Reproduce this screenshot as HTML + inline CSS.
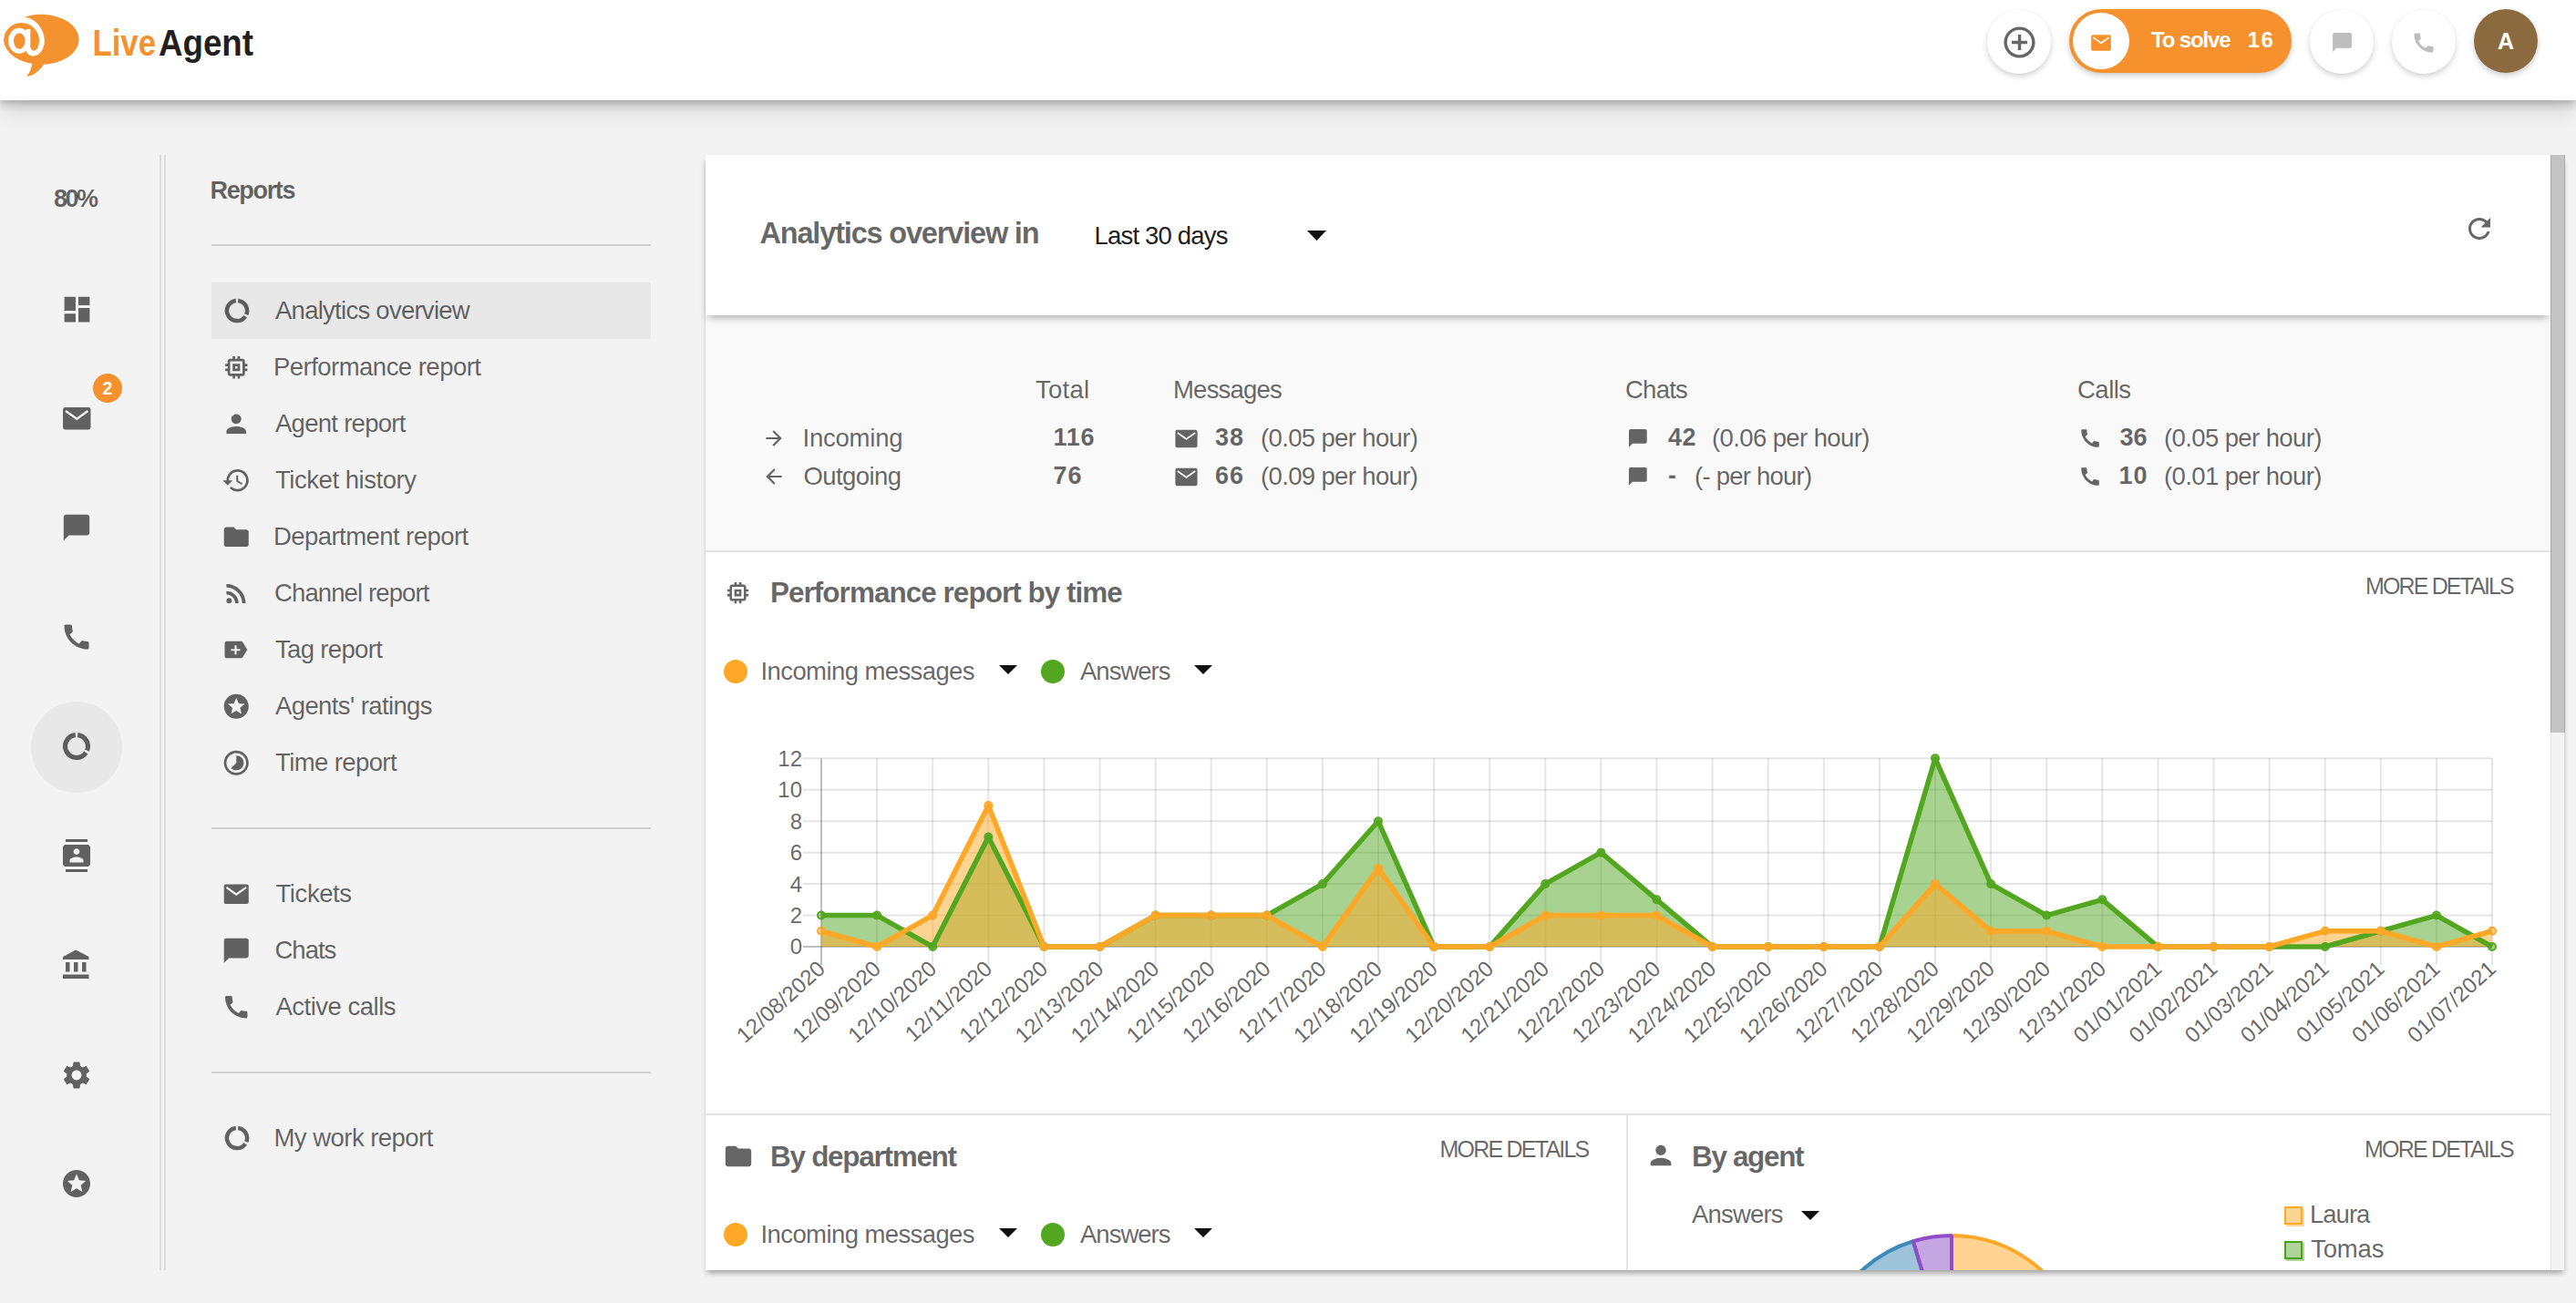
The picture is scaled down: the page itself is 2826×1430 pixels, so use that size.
<!DOCTYPE html>
<html><head><meta charset="utf-8"><style>
html,body{margin:0;padding:0;width:2826px;height:1430px;overflow:hidden;background:#f3f3f3;font-family:"Liberation Sans", sans-serif;}
.t{position:absolute;line-height:1;white-space:nowrap;}
.r{position:absolute;}
.ic{position:absolute;overflow:visible;}
</style></head><body>
<div class="r" style="left:0px;top:0px;width:2826px;height:110px;background:#fff;box-shadow:0 4px 9px rgba(0,0,0,0.22), 0 10px 26px rgba(0,0,0,0.14);z-index:5"></div>
<svg class="ic" style="left:0;top:0;width:300px;height:100px;z-index:6" viewBox="0 0 300 100">
<ellipse cx="45.3" cy="43.3" rx="41.3" ry="27.5" fill="#F4922F"/>
<path d="M35.5,69 C34.8,75 32.5,80 29.2,84 C36.5,83.5 42.5,78 48.5,70.5 Z" fill="#F4922F"/>
<path fill-rule="evenodd" fill="#fff" d="M0,0 H27.5 V25.41 A19.5,19.5 0 0,0 4,44.5 H0 Z"/>
<path fill="#fff" d="M27.5,18.9 C37,19.5 48.8,30 48.8,44.7 C48.8,54 43.5,61.4 36.5,61.4 C33.5,61.4 31,59.8 29.5,57.2 L34,53 C35,55 35.5,55.8 36.5,55.8 C40.5,55.8 43,50.5 43,44.5 A19.5,19.5 0 0,0 23.5,25 L23.5,18 Z"/>
<path fill-rule="evenodd" fill="#fff" d="M9,44.85 a12,14 0 1,0 24,0 a12,14 0 1,0 -24,0 Z M15,45 a6.25,8.7 0 1,0 12.5,0 a6.25,8.7 0 1,0 -12.5,0 Z"/>
<path fill="#fff" d="M28,32.6 L33.3,31.8 L33.3,50.5 C33.3,54 34.5,55.8 36.5,55.8 L36.5,61.4 C33,61.4 30.5,59.5 29,57 L27.5,53 Z"/>
<text x="101.5" y="60.6" font-family="Liberation Sans" font-weight="700" font-size="41" fill="#F4922F" textLength="69.5" lengthAdjust="spacingAndGlyphs">Live</text>
<text x="174" y="60.6" font-family="Liberation Sans" font-weight="700" font-size="41" fill="#231F20" textLength="104" lengthAdjust="spacingAndGlyphs">Agent</text>
</svg>
<div class="r" style="left:2180px;top:11px;width:70px;height:70px;border-radius:50%;background:#fff;box-shadow:0 3px 6px rgba(0,0,0,0.18);z-index:6"></div>
<svg class="ic" style="left:2194.50px;top:25.50px;width:41px;height:41px;fill:rgba(0,0,0,0.6);color:rgba(0,0,0,0.6);z-index:7" viewBox="0 0 24 24"><path d="M13 7h-2v4H7v2h4v4h2v-4h4v-2h-4V7zm-1-5C6.48 2 2 6.48 2 12s4.48 10 10 10 10-4.48 10-10S17.52 2 12 2zm0 18c-4.41 0-8-3.59-8-8s3.59-8 8-8 8 3.59 8 8-3.59 8-8 8z"/></svg>
<div class="r" style="left:2270px;top:10px;width:244px;height:70px;border-radius:35px;background:#F6912D;box-shadow:0 3px 6px rgba(0,0,0,0.2);z-index:6"></div>
<div class="r" style="left:2274px;top:14px;width:62px;height:62px;border-radius:50%;background:#fff;z-index:7"></div>
<svg class="ic" style="left:2292.10px;top:33.90px;width:26px;height:26px;fill:#F6912D;color:#F6912D;z-index:8" viewBox="0 0 24 24"><path fill-rule="evenodd" d="M3.6,4 H20.4 A1.6,1.6 0 0,1 22,5.6 V18.4 A1.6,1.6 0 0,1 20.4,20 H3.6 A1.6,1.6 0 0,1 2,18.4 V5.6 A1.6,1.6 0 0,1 3.6,4 Z M4.453,5.965 L12.000,11.342 L19.547,5.965 L20.453,7.235 L12.000,13.258 L3.547,7.235 Z"/></svg>
<div id="t1" class="t" style="left:2360.00px;top:32.18px;font-size:24px;font-weight:700;color:#fff;z-index:8;letter-spacing:-1.142px">To solve</div>
<div id="t2" class="t" style="left:2465.60px;top:32.18px;font-size:24px;font-weight:700;color:#fff;z-index:8;letter-spacing:1.500px">16</div>
<div class="r" style="left:2534px;top:11px;width:70px;height:70px;border-radius:50%;background:#fff;box-shadow:0 3px 6px rgba(0,0,0,0.18);z-index:6"></div>
<svg class="ic" style="left:2556.50px;top:34.00px;width:25px;height:25px;fill:#bdbdbd;color:#bdbdbd;z-index:7" viewBox="0 0 24 24"><path d="M20 2H4c-1.1 0-1.99.9-1.99 2L2 22l4-4h14c1.1 0 2-.9 2-2V4c0-1.1-.9-2-2-2z"/></svg>
<div class="r" style="left:2624px;top:11px;width:70px;height:70px;border-radius:50%;background:#fff;box-shadow:0 3px 6px rgba(0,0,0,0.18);z-index:6"></div>
<svg class="ic" style="left:2645.00px;top:32.50px;width:28px;height:28px;fill:#bdbdbd;color:#bdbdbd;z-index:7" viewBox="0 0 24 24"><path d="M20.01 15.38c-1.23 0-2.42-.2-3.53-.56-.35-.12-.74-.03-1.01.24l-1.57 1.97c-2.83-1.35-5.48-3.9-6.89-6.83l1.95-1.66c.27-.28.35-.67.24-1.02-.37-1.11-.56-2.3-.56-3.53 0-.54-.45-.99-.99-.99H4.19C3.65 3 3 3.24 3 3.99 3 13.28 10.73 21 20.01 21c.71 0 .99-.63.99-1.18v-3.45c0-.54-.45-.99-.99-.99z"/></svg>
<div class="r" style="left:2714px;top:10px;width:70px;height:70px;border-radius:50%;background:#8B6A3F;box-shadow:0 3px 6px rgba(0,0,0,0.2);z-index:6"></div>
<div class="t" style="left:2749.00px;top:32.64px;font-size:25px;font-weight:700;color:#fff;transform:translateX(-50%);z-index:8">A</div>
<div class="r" style="left:175px;top:170px;width:2px;height:1224px;background:#dcdcdc"></div>
<div class="r" style="left:180px;top:170px;width:2px;height:1224px;background:#dcdcdc"></div>
<div id="t4" class="t" style="left:59.00px;top:205.14px;font-size:27px;font-weight:700;color:rgba(0,0,0,0.6);;letter-spacing:-2.500px">80%</div>
<div class="r" style="left:34px;top:770px;width:100px;height:100px;border-radius:50%;background:#e8e8e8"></div>
<svg class="ic" style="left:65.50px;top:320.50px;width:37px;height:37px;fill:rgba(0,0,0,0.6);color:rgba(0,0,0,0.6);" viewBox="0 0 24 24"><path d="M3 13h8V3H3v10zm0 8h8v-6H3v6zm10 0h8V11h-8v10zm0-18v6h8V3h-8z"/></svg>
<svg class="ic" style="left:65.75px;top:440.75px;width:36.5px;height:36.5px;fill:rgba(0,0,0,0.6);color:rgba(0,0,0,0.6);" viewBox="0 0 24 24"><path fill-rule="evenodd" d="M3.6,4 H20.4 A1.6,1.6 0 0,1 22,5.6 V18.4 A1.6,1.6 0 0,1 20.4,20 H3.6 A1.6,1.6 0 0,1 2,18.4 V5.6 A1.6,1.6 0 0,1 3.6,4 Z M4.453,5.965 L12.000,11.342 L19.547,5.965 L20.453,7.235 L12.000,13.258 L3.547,7.235 Z"/></svg>
<svg class="ic" style="left:67.00px;top:562.00px;width:34px;height:34px;fill:rgba(0,0,0,0.6);color:rgba(0,0,0,0.6);" viewBox="0 0 24 24"><path d="M20 2H4c-1.1 0-1.99.9-1.99 2L2 22l4-4h14c1.1 0 2-.9 2-2V4c0-1.1-.9-2-2-2z"/></svg>
<svg class="ic" style="left:66.00px;top:681.00px;width:36px;height:36px;fill:rgba(0,0,0,0.6);color:rgba(0,0,0,0.6);" viewBox="0 0 24 24"><path d="M20.01 15.38c-1.23 0-2.42-.2-3.53-.56-.35-.12-.74-.03-1.01.24l-1.57 1.97c-2.83-1.35-5.48-3.9-6.89-6.83l1.95-1.66c.27-.28.35-.67.24-1.02-.37-1.11-.56-2.3-.56-3.53 0-.54-.45-.99-.99-.99H4.19C3.65 3 3 3.24 3 3.99 3 13.28 10.73 21 20.01 21c.71 0 .99-.63.99-1.18v-3.45c0-.54-.45-.99-.99-.99z"/></svg>
<svg class="ic" style="left:66.00px;top:801.00px;width:36px;height:36px;fill:rgba(0,0,0,0.6);color:rgba(0,0,0,0.6);" viewBox="0 0 24 24"><path d="M12.832,3.742 A8.3,8.3 0 0,1 19.696,15.109 M18.881,16.641 A8.3,8.3 0 1,1 11.168,3.742" fill="none" stroke="currentColor" stroke-width="3.4"/></svg>
<svg class="ic" style="left:66.00px;top:921.00px;width:36px;height:36px;fill:rgba(0,0,0,0.6);color:rgba(0,0,0,0.6);" viewBox="0 0 24 24"><path d="M20 0H4v2h16V0zM4 24h16v-2H4v2zM20 4H4c-1.1 0-2 .9-2 2v12c0 1.1.9 2 2 2h16c1.1 0 2-.9 2-2V6c0-1.1-.9-2-2-2zm-8 2.75c1.24 0 2.25 1.01 2.25 2.25s-1.01 2.25-2.25 2.25S9.750 10.24 9.75 9 10.76 6.75 12 6.75zM17 17H7v-1.5c0-1.67 3.33-2.5 5-2.5s5 .83 5 2.5V17z"/></svg>
<svg class="ic" style="left:66.00px;top:1041.00px;width:36px;height:36px;fill:rgba(0,0,0,0.6);color:rgba(0,0,0,0.6);" viewBox="0 0 24 24"><path d="M4 10v7h3v-7H4zm6 0v7h3v-7h-3zM2 22h19v-3H2v3zm14-12v7h3v-7h-3zm-4.5-9L2 6v2h19V6l-9.5-5z"/></svg>
<svg class="ic" style="left:66.00px;top:1162.00px;width:36px;height:36px;fill:rgba(0,0,0,0.6);color:rgba(0,0,0,0.6);" viewBox="0 0 24 24"><path d="M19.14 12.94c.04-.3.06-.61.06-.94 0-.32-.02-.64-.07-.94l2.03-1.58c.18-.14.23-.41.12-.61l-1.92-3.32c-.12-.22-.37-.29-.59-.22l-2.39.96c-.5-.38-1.03-.7-1.62-.94l-.36-2.54c-.04-.24-.24-.41-.48-.41h-3.84c-.24 0-.43.17-.47.41l-.36 2.540c-.59.24-1.13.57-1.62.94l-2.39-.96c-.22-.08-.47 0-.59.22L2.74 8.87c-.12.21-.08.47.12.61l2.03 1.58c-.05.3-.09.63-.09.94s.02.64.07.94l-2.03 1.58c-.18.14-.23.41-.12.61l1.920 3.32c.12.22.37.29.59.22l2.39-.96c.5.38 1.03.7 1.62.94l.36 2.54c.05.24.24.41.48.41h3.84c.24 0 .44-.17.47-.41l.36-2.54c.59-.24 1.13-.56 1.62-.94l2.39.96c.22.08.47 0 .59-.22l1.92-3.32c.12-.22.07-.47-.12-.61l-2.01-1.58zM12 15.6c-1.98 0-3.6-1.62-3.6-3.6s1.62-3.6 3.6-3.6 3.6 1.62 3.6 3.6-1.62 3.6-3.6 3.6z"/></svg>
<svg class="ic" style="left:66.00px;top:1281.00px;width:36px;height:36px;fill:rgba(0,0,0,0.6);color:rgba(0,0,0,0.6);" viewBox="0 0 24 24"><path d="M11.99 2C6.47 2 2 6.48 2 12s4.47 10 9.99 10C17.52 22 22 17.52 22 12S17.52 2 11.99 2zm4.24 16L12 15.45 7.77 18l1.12-4.81-3.73-3.23 4.92-.42L12 5l1.92 4.53 4.92.42-3.73 3.230L16.23 18z"/></svg>
<div class="r" style="left:102px;top:410px;width:32px;height:32px;border-radius:50%;background:#F6912D"></div>
<div class="t" style="left:118.00px;top:416.69px;font-size:19.5px;font-weight:700;color:#fff;transform:translateX(-50%);">2</div>
<div id="t6" class="t" style="left:230.50px;top:195.64px;font-size:27px;font-weight:700;color:rgba(0,0,0,0.6);;letter-spacing:-1.334px">Reports</div>
<div class="r" style="left:232px;top:268px;width:482px;height:2px;background:#cfcfcf"></div>
<div class="r" style="left:232px;top:310px;width:482px;height:62px;background:#e8e8e8"></div>
<svg class="ic" style="left:243.60px;top:325.00px;width:32px;height:32px;fill:rgba(0,0,0,0.6);color:rgba(0,0,0,0.6);" viewBox="0 0 24 24"><path d="M12.832,3.742 A8.3,8.3 0 0,1 19.696,15.109 M18.881,16.641 A8.3,8.3 0 1,1 11.168,3.742" fill="none" stroke="currentColor" stroke-width="3.4"/></svg>
<div id="t7" class="t" style="left:302.00px;top:326.72px;font-size:27.5px;font-weight:400;color:rgba(0,0,0,0.6);;letter-spacing:-0.736px">Analytics overview</div>
<svg class="ic" style="left:243.35px;top:386.75px;width:32.5px;height:32.5px;fill:rgba(0,0,0,0.6);color:rgba(0,0,0,0.6);" viewBox="0 0 24 24"><path d="M15 9H9v6h6V9zm-2 4h-2v-2h2v2zm8-2V9h-2V7c0-1.1-.9-2-2-2h-2V3h-2v2h-2V3H9v2H7c-1.1 0-2 .9-2 2v2H3v2h2v2H3v2h2v2c0 1.1.9 2 2 2h2v2h2v-2h2v2h2v-2h2c1.1 0 2-.9 2-2v-2h2v-2h-2v-2h2zm-4 6H7V7h10v10z"/></svg>
<div id="t8" class="t" style="left:300.00px;top:388.72px;font-size:27.5px;font-weight:400;color:rgba(0,0,0,0.6);;letter-spacing:-0.528px">Performance report</div>
<svg class="ic" style="left:243.35px;top:448.75px;width:32.5px;height:32.5px;fill:rgba(0,0,0,0.6);color:rgba(0,0,0,0.6);" viewBox="0 0 24 24"><path d="M12 12c2.21 0 4-1.79 4-4s-1.79-4-4-4-4 1.79-4 4 1.79 4 4 4zm0 2c-2.67 0-8 1.34-8 4v2h16v-2c0-2.66-5.33-4-8-4z"/></svg>
<div id="t9" class="t" style="left:302.00px;top:450.72px;font-size:27.5px;font-weight:400;color:rgba(0,0,0,0.6);;letter-spacing:-0.728px">Agent report</div>
<svg class="ic" style="left:243.35px;top:510.75px;width:32.5px;height:32.5px;fill:rgba(0,0,0,0.6);color:rgba(0,0,0,0.6);" viewBox="0 0 24 24"><path d="M13 3c-4.97 0-9 4.03-9 9H1l3.89 3.89.07.14L9 12H6c0-3.87 3.13-7 7-7s7 3.13 7 7-3.130 7-7 7c-1.93 0-3.68-.79-4.94-2.06l-1.42 1.42C8.27 19.99 10.51 21 13 21c4.97 0 9-4.03 9-9s-4.03-9-9-9zm-1 5v5l4.28 2.54.72-1.21-3.5-2.08V8H12z"/></svg>
<div id="t10" class="t" style="left:302.00px;top:512.72px;font-size:27.5px;font-weight:400;color:rgba(0,0,0,0.6);;letter-spacing:-0.461px">Ticket history</div>
<svg class="ic" style="left:243.35px;top:572.75px;width:32.5px;height:32.5px;fill:rgba(0,0,0,0.6);color:rgba(0,0,0,0.6);" viewBox="0 0 24 24"><path d="M10 4H4c-1.1 0-1.99.9-1.99 2L2 18c0 1.1.9 2 2 2h16c1.1 0 2-.9 2-2V8c0-1.1-.9-2-2-2h-8l-2-2z"/></svg>
<div id="t11" class="t" style="left:300.00px;top:574.72px;font-size:27.5px;font-weight:400;color:rgba(0,0,0,0.6);;letter-spacing:-0.563px">Department report</div>
<svg class="ic" style="left:243.35px;top:634.75px;width:32.5px;height:32.5px;fill:rgba(0,0,0,0.6);color:rgba(0,0,0,0.6);" viewBox="0 0 24 24"><circle cx="6.18" cy="17.82" r="2.18"/><path d="M4 4.44v2.83c7.03 0 12.73 5.7 12.73 12.73h2.83c0-8.59-6.97-15.56-15.56-15.56zm0 5.66v2.83c3.9 0 7.07 3.17 7.07 7.07h2.83c0-5.47-4.43-9.9-9.9-9.9z"/></svg>
<div id="t12" class="t" style="left:301.00px;top:636.72px;font-size:27.5px;font-weight:400;color:rgba(0,0,0,0.6);;letter-spacing:-0.883px">Channel report</div>
<svg class="ic" style="left:242.50px;top:697.00px;width:32px;height:32px;fill:rgba(0,0,0,0.6);color:rgba(0,0,0,0.6);" viewBox="0 0 24 24"><path fill-rule="evenodd" d="M4.1,5.06 H16.0 C16.6,5.06 17.1,5.3 17.45,5.8 L21.3,12 L17.45,18.2 C17.1,18.7 16.6,18.94 16,18.94 H4.1 C3.3,18.94 2.625,18.2 2.625,17.4 V6.6 C2.625,5.8 3.3,5.06 4.1,5.06 Z M10.81,8.4 h1.58 v3.01 h3.01 v1.58 h-3.01 v3.01 h-1.58 v-3.01 h-3.01 v-1.58 h3.01 Z"/></svg>
<div id="t13" class="t" style="left:302.00px;top:698.72px;font-size:27.5px;font-weight:400;color:rgba(0,0,0,0.6);;letter-spacing:-0.668px">Tag report</div>
<svg class="ic" style="left:243.35px;top:758.75px;width:32.5px;height:32.5px;fill:rgba(0,0,0,0.6);color:rgba(0,0,0,0.6);" viewBox="0 0 24 24"><path d="M11.99 2C6.47 2 2 6.48 2 12s4.47 10 9.99 10C17.52 22 22 17.52 22 12S17.52 2 11.99 2zm4.24 16L12 15.45 7.77 18l1.12-4.81-3.73-3.23 4.92-.42L12 5l1.92 4.53 4.92.42-3.73 3.230L16.23 18z"/></svg>
<div id="t14" class="t" style="left:302.00px;top:760.72px;font-size:27.5px;font-weight:400;color:rgba(0,0,0,0.6);;letter-spacing:-0.607px">Agents' ratings</div>
<svg class="ic" style="left:243.35px;top:820.75px;width:32.5px;height:32.5px;fill:rgba(0,0,0,0.6);color:rgba(0,0,0,0.6);" viewBox="0 0 24 24"><path d="M16.24 7.76C15.07 6.59 13.54 6 12 6v6l-4.24 4.24c2.34 2.34 6.14 2.34 8.49 0 2.34-2.34 2.34-6.14-.01-8.48zM12 2C6.48 2 2 6.48 2 12s4.48 10 10 10 10-4.48 10-10S17.52 2 12 2zm0 18c-4.42 0-8-3.58-8-8s3.58-8 8-8 8 3.58 8 8-3.58 8-8 8z"/></svg>
<div id="t15" class="t" style="left:302.00px;top:822.72px;font-size:27.5px;font-weight:400;color:rgba(0,0,0,0.6);;letter-spacing:-0.600px">Time report</div>
<div class="r" style="left:232px;top:908px;width:482px;height:2px;background:#cfcfcf"></div>
<svg class="ic" style="left:243.35px;top:964.75px;width:32.5px;height:32.5px;fill:rgba(0,0,0,0.6);color:rgba(0,0,0,0.6);" viewBox="0 0 24 24"><path fill-rule="evenodd" d="M3.6,4 H20.4 A1.6,1.6 0 0,1 22,5.6 V18.4 A1.6,1.6 0 0,1 20.4,20 H3.6 A1.6,1.6 0 0,1 2,18.4 V5.6 A1.6,1.6 0 0,1 3.6,4 Z M4.453,5.965 L12.000,11.342 L19.547,5.965 L20.453,7.235 L12.000,13.258 L3.547,7.235 Z"/></svg>
<div id="t16" class="t" style="left:302.50px;top:966.72px;font-size:27.5px;font-weight:400;color:rgba(0,0,0,0.6);;letter-spacing:-0.417px">Tickets</div>
<svg class="ic" style="left:243.35px;top:1026.75px;width:32.5px;height:32.5px;fill:rgba(0,0,0,0.6);color:rgba(0,0,0,0.6);" viewBox="0 0 24 24"><path d="M20 2H4c-1.1 0-1.99.9-1.99 2L2 22l4-4h14c1.1 0 2-.9 2-2V4c0-1.1-.9-2-2-2z"/></svg>
<div id="t17" class="t" style="left:301.50px;top:1028.72px;font-size:27.5px;font-weight:400;color:rgba(0,0,0,0.6);;letter-spacing:-1.000px">Chats</div>
<svg class="ic" style="left:243.35px;top:1088.75px;width:32.5px;height:32.5px;fill:rgba(0,0,0,0.6);color:rgba(0,0,0,0.6);" viewBox="0 0 24 24"><path d="M20.01 15.38c-1.23 0-2.42-.2-3.53-.56-.35-.12-.74-.03-1.01.24l-1.57 1.97c-2.83-1.35-5.48-3.9-6.89-6.83l1.95-1.66c.27-.28.35-.67.24-1.02-.37-1.11-.56-2.3-.56-3.53 0-.54-.45-.99-.99-.99H4.19C3.65 3 3 3.24 3 3.99 3 13.28 10.73 21 20.01 21c.71 0 .99-.63.99-1.18v-3.45c0-.54-.45-.99-.99-.99z"/></svg>
<div id="t18" class="t" style="left:302.50px;top:1090.72px;font-size:27.5px;font-weight:400;color:rgba(0,0,0,0.6);;letter-spacing:-0.501px">Active calls</div>
<div class="r" style="left:232px;top:1176px;width:482px;height:2px;background:#cfcfcf"></div>
<svg class="ic" style="left:243.60px;top:1233.00px;width:32px;height:32px;fill:rgba(0,0,0,0.6);color:rgba(0,0,0,0.6);" viewBox="0 0 24 24"><path d="M12.832,3.742 A8.3,8.3 0 0,1 19.696,15.109 M18.881,16.641 A8.3,8.3 0 1,1 11.168,3.742" fill="none" stroke="currentColor" stroke-width="3.4"/></svg>
<div id="t19" class="t" style="left:300.50px;top:1234.72px;font-size:27.5px;font-weight:400;color:rgba(0,0,0,0.6);;letter-spacing:-0.539px">My work report</div>
<div class="r" style="left:774px;top:170px;width:2040px;height:1224px;background:#fff;box-shadow:0 5px 6px -2px rgba(0,0,0,0.35)"></div>
<div class="r" style="left:774px;top:347px;width:2024px;height:258px;background:#f9f9f9"></div>
<div class="r" style="left:774px;top:170px;width:2024px;height:176px;background:#fff;box-shadow:0 5px 9px -3px rgba(0,0,0,0.34);z-index:2"></div>
<div class="r" style="left:774px;top:604px;width:2024px;height:2px;background:#e3e3e3"></div>
<div class="r" style="left:774px;top:1222px;width:2024px;height:2px;background:#e3e3e3"></div>
<div class="r" style="left:1784px;top:1223px;width:2px;height:171px;background:#e3e3e3"></div>
<div class="r" style="left:2798px;top:170px;width:16px;height:1224px;background:#f3f3f3;border-left:1px solid #e2e2e2;border-right:1px solid #dcdcdc;box-sizing:border-box;z-index:3"></div>
<div class="r" style="left:2798px;top:170px;width:16px;height:634px;background:#c3c3c3;border-left:1px solid #ababab;border-right:1px solid #ababab;box-sizing:border-box;z-index:3"></div>
<div id="t20" class="t" style="left:833.50px;top:240.49px;font-size:32.5px;font-weight:700;color:rgba(0,0,0,0.6);z-index:3;letter-spacing:-1.175px">Analytics overview in</div>
<div id="t21" class="t" style="left:1200.50px;top:244.72px;font-size:27.5px;font-weight:400;color:#212121;z-index:3;letter-spacing:-0.817px">Last 30 days</div>
<svg class="ic" style="left:1434px;top:253px;width:21px;height:11px;z-index:3" viewBox="0 0 21 11"><path d="M0 0h21L10.5 11z" fill="#111"/></svg>
<svg class="ic" style="left:2701.50px;top:233.00px;width:36px;height:36px;fill:rgba(0,0,0,0.6);color:rgba(0,0,0,0.6);z-index:3" viewBox="0 0 24 24"><path d="M17.65 6.35C16.2 4.9 14.21 4 12 4c-4.42 0-7.99 3.58-7.99 8s3.57 8 7.99 8c3.73 0 6.840-2.55 7.73-6h-2.08c-.82 2.33-3.04 4-5.65 4-3.31 0-6-2.69-6-6s2.69-6 6-6c1.66 0 3.14.69 4.22 1.78L13 11h7V4l-2.35 2.35z"/></svg>
<div id="t22" class="t" style="left:1136.00px;top:413.72px;font-size:27.5px;font-weight:400;color:rgba(0,0,0,0.6);;letter-spacing:0.250px">Total</div>
<div id="t23" class="t" style="left:1287.00px;top:413.72px;font-size:27.5px;font-weight:400;color:rgba(0,0,0,0.6);;letter-spacing:-0.785px">Messages</div>
<div id="t24" class="t" style="left:1783.00px;top:413.72px;font-size:27.5px;font-weight:400;color:rgba(0,0,0,0.6);;letter-spacing:-0.750px">Chats</div>
<div id="t25" class="t" style="left:2279.00px;top:413.72px;font-size:27.5px;font-weight:400;color:rgba(0,0,0,0.6);;letter-spacing:-0.500px">Calls</div>
<svg class="ic" style="left:836.00px;top:468.00px;width:26px;height:26px;fill:rgba(0,0,0,0.6);color:rgba(0,0,0,0.6);" viewBox="0 0 24 24"><path d="M12 4l-1.41 1.41L16.17 11H4v2h12.17l-5.58 5.59L12 20l8-8z"/></svg>
<div id="t26" class="t" style="left:880.50px;top:466.72px;font-size:27.5px;font-weight:400;color:rgba(0,0,0,0.6);;letter-spacing:-0.214px">Incoming</div>
<div id="t27" class="t" style="left:1155.50px;top:467.14px;font-size:27px;font-weight:700;color:rgba(0,0,0,0.6);;letter-spacing:0.750px">116</div>
<svg class="ic" style="left:1286.50px;top:466.50px;width:29px;height:29px;fill:rgba(0,0,0,0.6);color:rgba(0,0,0,0.6);" viewBox="0 0 24 24"><path fill-rule="evenodd" d="M3.6,4 H20.4 A1.6,1.6 0 0,1 22,5.6 V18.4 A1.6,1.6 0 0,1 20.4,20 H3.6 A1.6,1.6 0 0,1 2,18.4 V5.6 A1.6,1.6 0 0,1 3.6,4 Z M4.453,5.965 L12.000,11.342 L19.547,5.965 L20.453,7.235 L12.000,13.258 L3.547,7.235 Z"/></svg>
<div id="t28" class="t" style="left:1333.00px;top:467.14px;font-size:27px;font-weight:700;color:rgba(0,0,0,0.6);;letter-spacing:1.000px">38</div>
<div id="t29" class="t" style="left:1383.00px;top:466.72px;font-size:27.5px;font-weight:400;color:rgba(0,0,0,0.6);;letter-spacing:-0.643px">(0.05 per hour)</div>
<svg class="ic" style="left:1785.15px;top:468.95px;width:23.7px;height:23.7px;fill:rgba(0,0,0,0.6);color:rgba(0,0,0,0.6);" viewBox="0 0 24 24"><path d="M20 2H4c-1.1 0-1.99.9-1.99 2L2 22l4-4h14c1.1 0 2-.9 2-2V4c0-1.1-.9-2-2-2z"/></svg>
<div id="t30" class="t" style="left:1830.00px;top:467.14px;font-size:27px;font-weight:700;color:rgba(0,0,0,0.6);;letter-spacing:0.500px">42</div>
<div id="t31" class="t" style="left:1878.00px;top:466.72px;font-size:27.5px;font-weight:400;color:rgba(0,0,0,0.6);;letter-spacing:-0.606px">(0.06 per hour)</div>
<svg class="ic" style="left:2279.50px;top:468.00px;width:26px;height:26px;fill:rgba(0,0,0,0.6);color:rgba(0,0,0,0.6);" viewBox="0 0 24 24"><path d="M20.01 15.38c-1.23 0-2.42-.2-3.53-.56-.35-.12-.74-.03-1.01.24l-1.57 1.97c-2.83-1.35-5.48-3.9-6.89-6.83l1.95-1.66c.27-.28.35-.67.24-1.02-.37-1.11-.56-2.3-.56-3.53 0-.54-.45-.99-.99-.99H4.19C3.65 3 3 3.24 3 3.99 3 13.28 10.73 21 20.01 21c.71 0 .99-.63.99-1.18v-3.45c0-.54-.45-.99-.99-.99z"/></svg>
<div id="t32" class="t" style="left:2325.50px;top:467.14px;font-size:27px;font-weight:700;color:rgba(0,0,0,0.6);;letter-spacing:-0.000px">36</div>
<div id="t33" class="t" style="left:2374.00px;top:466.72px;font-size:27.5px;font-weight:400;color:rgba(0,0,0,0.6);;letter-spacing:-0.606px">(0.05 per hour)</div>
<svg class="ic" style="left:836.00px;top:510.00px;width:26px;height:26px;fill:rgba(0,0,0,0.6);color:rgba(0,0,0,0.6);" viewBox="0 0 24 24"><path d="M20 11H7.83l5.59-5.59L12 4l-8 8 8 8 1.41-1.41L7.83 13H20v-2z"/></svg>
<div id="t34" class="t" style="left:881.50px;top:508.72px;font-size:27.5px;font-weight:400;color:rgba(0,0,0,0.6);;letter-spacing:-0.571px">Outgoing</div>
<div id="t35" class="t" style="left:1155.50px;top:509.14px;font-size:27px;font-weight:700;color:rgba(0,0,0,0.6);;letter-spacing:1.000px">76</div>
<svg class="ic" style="left:1286.50px;top:508.50px;width:29px;height:29px;fill:rgba(0,0,0,0.6);color:rgba(0,0,0,0.6);" viewBox="0 0 24 24"><path fill-rule="evenodd" d="M3.6,4 H20.4 A1.6,1.6 0 0,1 22,5.6 V18.4 A1.6,1.6 0 0,1 20.4,20 H3.6 A1.6,1.6 0 0,1 2,18.4 V5.6 A1.6,1.6 0 0,1 3.6,4 Z M4.453,5.965 L12.000,11.342 L19.547,5.965 L20.453,7.235 L12.000,13.258 L3.547,7.235 Z"/></svg>
<div id="t36" class="t" style="left:1333.00px;top:509.14px;font-size:27px;font-weight:700;color:rgba(0,0,0,0.6);;letter-spacing:1.000px">66</div>
<div id="t37" class="t" style="left:1383.00px;top:508.72px;font-size:27.5px;font-weight:400;color:rgba(0,0,0,0.6);;letter-spacing:-0.643px">(0.09 per hour)</div>
<svg class="ic" style="left:1785.15px;top:510.95px;width:23.7px;height:23.7px;fill:rgba(0,0,0,0.6);color:rgba(0,0,0,0.6);" viewBox="0 0 24 24"><path d="M20 2H4c-1.1 0-1.99.9-1.99 2L2 22l4-4h14c1.1 0 2-.9 2-2V4c0-1.1-.9-2-2-2z"/></svg>
<div class="t" style="left:1830.00px;top:509.14px;font-size:27px;font-weight:700;color:rgba(0,0,0,0.6);">-</div>
<div id="t39" class="t" style="left:1859.00px;top:508.72px;font-size:27.5px;font-weight:400;color:rgba(0,0,0,0.6);;letter-spacing:-0.773px">(- per hour)</div>
<svg class="ic" style="left:2279.50px;top:510.00px;width:26px;height:26px;fill:rgba(0,0,0,0.6);color:rgba(0,0,0,0.6);" viewBox="0 0 24 24"><path d="M20.01 15.38c-1.23 0-2.42-.2-3.53-.56-.35-.12-.74-.03-1.01.24l-1.57 1.97c-2.83-1.35-5.48-3.9-6.89-6.83l1.95-1.66c.27-.28.35-.67.24-1.02-.37-1.11-.56-2.3-.56-3.53 0-.54-.45-.99-.99-.99H4.19C3.65 3 3 3.24 3 3.99 3 13.28 10.73 21 20.01 21c.71 0 .99-.63.99-1.18v-3.45c0-.54-.45-.99-.99-.99z"/></svg>
<div id="t40" class="t" style="left:2324.50px;top:509.14px;font-size:27px;font-weight:700;color:rgba(0,0,0,0.6);;letter-spacing:1.000px">10</div>
<div id="t41" class="t" style="left:2374.00px;top:508.72px;font-size:27.5px;font-weight:400;color:rgba(0,0,0,0.6);;letter-spacing:-0.606px">(0.01 per hour)</div>
<svg class="ic" style="left:794.00px;top:635.00px;width:31px;height:31px;fill:rgba(0,0,0,0.6);color:rgba(0,0,0,0.6);" viewBox="0 0 24 24"><path d="M15 9H9v6h6V9zm-2 4h-2v-2h2v2zm8-2V9h-2V7c0-1.1-.9-2-2-2h-2V3h-2v2h-2V3H9v2H7c-1.1 0-2 .9-2 2v2H3v2h2v2H3v2h2v2c0 1.1.9 2 2 2h2v2h2v-2h2v2h2v-2h2c1.1 0 2-.9 2-2v-2h2v-2h-2v-2h2zm-4 6H7V7h10v10z"/></svg>
<div id="t42" class="t" style="left:845.00px;top:635.34px;font-size:31.5px;font-weight:700;color:rgba(0,0,0,0.6);;letter-spacing:-0.980px">Performance report by time</div>
<div id="t43" class="t" style="left:2595.00px;top:630.84px;font-size:25px;font-weight:400;color:rgba(0,0,0,0.6);;letter-spacing:-1.864px">MORE DETAILS</div>
<div class="r" style="left:794px;top:724px;width:26px;height:26px;border-radius:50%;background:#FFA726"></div><div id="t44" class="t" style="left:834.50px;top:722.72px;font-size:27.5px;font-weight:400;color:rgba(0,0,0,0.6);;letter-spacing:-0.594px">Incoming messages</div><svg class="ic" style="left:1096px;top:730px;width:20px;height:10px" viewBox="0 0 20 10"><path d="M0 0h20L10 10z" fill="#111"/></svg><div class="r" style="left:1142px;top:724px;width:26px;height:26px;border-radius:50%;background:#52A620"></div><div id="t45" class="t" style="left:1185.00px;top:722.72px;font-size:27.5px;font-weight:400;color:rgba(0,0,0,0.6);;letter-spacing:-1.001px">Answers</div><svg class="ic" style="left:1310px;top:730px;width:20px;height:10px" viewBox="0 0 20 10"><path d="M0 0h20L10 10z" fill="#111"/></svg>
<svg class="ic" style="left:860px;top:780px;width:1960px;height:420px" viewBox="860 780 1960 420">
<line x1="881" y1="1039.00" x2="2734.00" y2="1039.00" stroke="rgba(0,0,0,0.25)" stroke-width="2"/>
<line x1="881" y1="1004.55" x2="2734.00" y2="1004.55" stroke="rgba(0,0,0,0.1)" stroke-width="2"/>
<line x1="881" y1="970.10" x2="2734.00" y2="970.10" stroke="rgba(0,0,0,0.1)" stroke-width="2"/>
<line x1="881" y1="935.65" x2="2734.00" y2="935.65" stroke="rgba(0,0,0,0.1)" stroke-width="2"/>
<line x1="881" y1="901.20" x2="2734.00" y2="901.20" stroke="rgba(0,0,0,0.1)" stroke-width="2"/>
<line x1="881" y1="866.75" x2="2734.00" y2="866.75" stroke="rgba(0,0,0,0.1)" stroke-width="2"/>
<line x1="881" y1="832.30" x2="2734.00" y2="832.30" stroke="rgba(0,0,0,0.1)" stroke-width="2"/>
<line x1="901.00" y1="832.30" x2="901.00" y2="1059" stroke="rgba(0,0,0,0.25)" stroke-width="2"/>
<line x1="962.10" y1="832.30" x2="962.10" y2="1059" stroke="rgba(0,0,0,0.1)" stroke-width="2"/>
<line x1="1023.20" y1="832.30" x2="1023.20" y2="1059" stroke="rgba(0,0,0,0.1)" stroke-width="2"/>
<line x1="1084.30" y1="832.30" x2="1084.30" y2="1059" stroke="rgba(0,0,0,0.1)" stroke-width="2"/>
<line x1="1145.40" y1="832.30" x2="1145.40" y2="1059" stroke="rgba(0,0,0,0.1)" stroke-width="2"/>
<line x1="1206.50" y1="832.30" x2="1206.50" y2="1059" stroke="rgba(0,0,0,0.1)" stroke-width="2"/>
<line x1="1267.60" y1="832.30" x2="1267.60" y2="1059" stroke="rgba(0,0,0,0.1)" stroke-width="2"/>
<line x1="1328.70" y1="832.30" x2="1328.70" y2="1059" stroke="rgba(0,0,0,0.1)" stroke-width="2"/>
<line x1="1389.80" y1="832.30" x2="1389.80" y2="1059" stroke="rgba(0,0,0,0.1)" stroke-width="2"/>
<line x1="1450.90" y1="832.30" x2="1450.90" y2="1059" stroke="rgba(0,0,0,0.1)" stroke-width="2"/>
<line x1="1512.00" y1="832.30" x2="1512.00" y2="1059" stroke="rgba(0,0,0,0.1)" stroke-width="2"/>
<line x1="1573.10" y1="832.30" x2="1573.10" y2="1059" stroke="rgba(0,0,0,0.1)" stroke-width="2"/>
<line x1="1634.20" y1="832.30" x2="1634.20" y2="1059" stroke="rgba(0,0,0,0.1)" stroke-width="2"/>
<line x1="1695.30" y1="832.30" x2="1695.30" y2="1059" stroke="rgba(0,0,0,0.1)" stroke-width="2"/>
<line x1="1756.40" y1="832.30" x2="1756.40" y2="1059" stroke="rgba(0,0,0,0.1)" stroke-width="2"/>
<line x1="1817.50" y1="832.30" x2="1817.50" y2="1059" stroke="rgba(0,0,0,0.1)" stroke-width="2"/>
<line x1="1878.60" y1="832.30" x2="1878.60" y2="1059" stroke="rgba(0,0,0,0.1)" stroke-width="2"/>
<line x1="1939.70" y1="832.30" x2="1939.70" y2="1059" stroke="rgba(0,0,0,0.1)" stroke-width="2"/>
<line x1="2000.80" y1="832.30" x2="2000.80" y2="1059" stroke="rgba(0,0,0,0.1)" stroke-width="2"/>
<line x1="2061.90" y1="832.30" x2="2061.90" y2="1059" stroke="rgba(0,0,0,0.1)" stroke-width="2"/>
<line x1="2123.00" y1="832.30" x2="2123.00" y2="1059" stroke="rgba(0,0,0,0.1)" stroke-width="2"/>
<line x1="2184.10" y1="832.30" x2="2184.10" y2="1059" stroke="rgba(0,0,0,0.1)" stroke-width="2"/>
<line x1="2245.20" y1="832.30" x2="2245.20" y2="1059" stroke="rgba(0,0,0,0.1)" stroke-width="2"/>
<line x1="2306.30" y1="832.30" x2="2306.30" y2="1059" stroke="rgba(0,0,0,0.1)" stroke-width="2"/>
<line x1="2367.40" y1="832.30" x2="2367.40" y2="1059" stroke="rgba(0,0,0,0.1)" stroke-width="2"/>
<line x1="2428.50" y1="832.30" x2="2428.50" y2="1059" stroke="rgba(0,0,0,0.1)" stroke-width="2"/>
<line x1="2489.60" y1="832.30" x2="2489.60" y2="1059" stroke="rgba(0,0,0,0.1)" stroke-width="2"/>
<line x1="2550.70" y1="832.30" x2="2550.70" y2="1059" stroke="rgba(0,0,0,0.1)" stroke-width="2"/>
<line x1="2611.80" y1="832.30" x2="2611.80" y2="1059" stroke="rgba(0,0,0,0.1)" stroke-width="2"/>
<line x1="2672.90" y1="832.30" x2="2672.90" y2="1059" stroke="rgba(0,0,0,0.1)" stroke-width="2"/>
<line x1="2734.00" y1="832.30" x2="2734.00" y2="1059" stroke="rgba(0,0,0,0.1)" stroke-width="2"/>
<polygon points="901.00,1039.00 901.00,1004.55 962.10,1004.55 1023.20,1039.00 1084.30,918.42 1145.40,1039.00 1206.50,1039.00 1267.60,1004.55 1328.70,1004.55 1389.80,1004.55 1450.90,970.10 1512.00,901.20 1573.10,1039.00 1634.20,1039.00 1695.30,970.10 1756.40,935.65 1817.50,987.33 1878.60,1039.00 1939.70,1039.00 2000.80,1039.00 2061.90,1039.00 2123.00,832.30 2184.10,970.10 2245.20,1004.55 2306.30,987.33 2367.40,1039.00 2428.50,1039.00 2489.60,1039.00 2550.70,1039.00 2611.80,1021.77 2672.90,1004.55 2734.00,1039.00 2734.00,1039.00" fill="rgba(82,166,32,0.5)"/>
<polygon points="901.00,1039.00 901.00,1021.77 962.10,1039.00 1023.20,1004.55 1084.30,883.98 1145.40,1039.00 1206.50,1039.00 1267.60,1004.55 1328.70,1004.55 1389.80,1004.55 1450.90,1039.00 1512.00,952.88 1573.10,1039.00 1634.20,1039.00 1695.30,1004.55 1756.40,1004.55 1817.50,1004.55 1878.60,1039.00 1939.70,1039.00 2000.80,1039.00 2061.90,1039.00 2123.00,970.10 2184.10,1021.77 2245.20,1021.77 2306.30,1039.00 2367.40,1039.00 2428.50,1039.00 2489.60,1039.00 2550.70,1021.77 2611.80,1021.77 2672.90,1039.00 2734.00,1021.77 2734.00,1039.00" fill="rgba(255,167,38,0.5)"/>
<polyline points="901.00,1004.55 962.10,1004.55 1023.20,1039.00 1084.30,918.42 1145.40,1039.00 1206.50,1039.00 1267.60,1004.55 1328.70,1004.55 1389.80,1004.55 1450.90,970.10 1512.00,901.20 1573.10,1039.00 1634.20,1039.00 1695.30,970.10 1756.40,935.65 1817.50,987.33 1878.60,1039.00 1939.70,1039.00 2000.80,1039.00 2061.90,1039.00 2123.00,832.30 2184.10,970.10 2245.20,1004.55 2306.30,987.33 2367.40,1039.00 2428.50,1039.00 2489.60,1039.00 2550.70,1039.00 2611.80,1021.77 2672.90,1004.55 2734.00,1039.00" fill="none" stroke="rgb(82,166,32)" stroke-width="5.5" stroke-linejoin="round"/>
<circle cx="901.00" cy="1004.55" r="4" fill="rgba(82,166,32,0.5)" stroke="rgb(82,166,32)" stroke-width="2"/>
<circle cx="962.10" cy="1004.55" r="4" fill="rgba(82,166,32,0.5)" stroke="rgb(82,166,32)" stroke-width="2"/>
<circle cx="1023.20" cy="1039.00" r="4" fill="rgba(82,166,32,0.5)" stroke="rgb(82,166,32)" stroke-width="2"/>
<circle cx="1084.30" cy="918.42" r="4" fill="rgba(82,166,32,0.5)" stroke="rgb(82,166,32)" stroke-width="2"/>
<circle cx="1145.40" cy="1039.00" r="4" fill="rgba(82,166,32,0.5)" stroke="rgb(82,166,32)" stroke-width="2"/>
<circle cx="1206.50" cy="1039.00" r="4" fill="rgba(82,166,32,0.5)" stroke="rgb(82,166,32)" stroke-width="2"/>
<circle cx="1267.60" cy="1004.55" r="4" fill="rgba(82,166,32,0.5)" stroke="rgb(82,166,32)" stroke-width="2"/>
<circle cx="1328.70" cy="1004.55" r="4" fill="rgba(82,166,32,0.5)" stroke="rgb(82,166,32)" stroke-width="2"/>
<circle cx="1389.80" cy="1004.55" r="4" fill="rgba(82,166,32,0.5)" stroke="rgb(82,166,32)" stroke-width="2"/>
<circle cx="1450.90" cy="970.10" r="4" fill="rgba(82,166,32,0.5)" stroke="rgb(82,166,32)" stroke-width="2"/>
<circle cx="1512.00" cy="901.20" r="4" fill="rgba(82,166,32,0.5)" stroke="rgb(82,166,32)" stroke-width="2"/>
<circle cx="1573.10" cy="1039.00" r="4" fill="rgba(82,166,32,0.5)" stroke="rgb(82,166,32)" stroke-width="2"/>
<circle cx="1634.20" cy="1039.00" r="4" fill="rgba(82,166,32,0.5)" stroke="rgb(82,166,32)" stroke-width="2"/>
<circle cx="1695.30" cy="970.10" r="4" fill="rgba(82,166,32,0.5)" stroke="rgb(82,166,32)" stroke-width="2"/>
<circle cx="1756.40" cy="935.65" r="4" fill="rgba(82,166,32,0.5)" stroke="rgb(82,166,32)" stroke-width="2"/>
<circle cx="1817.50" cy="987.33" r="4" fill="rgba(82,166,32,0.5)" stroke="rgb(82,166,32)" stroke-width="2"/>
<circle cx="1878.60" cy="1039.00" r="4" fill="rgba(82,166,32,0.5)" stroke="rgb(82,166,32)" stroke-width="2"/>
<circle cx="1939.70" cy="1039.00" r="4" fill="rgba(82,166,32,0.5)" stroke="rgb(82,166,32)" stroke-width="2"/>
<circle cx="2000.80" cy="1039.00" r="4" fill="rgba(82,166,32,0.5)" stroke="rgb(82,166,32)" stroke-width="2"/>
<circle cx="2061.90" cy="1039.00" r="4" fill="rgba(82,166,32,0.5)" stroke="rgb(82,166,32)" stroke-width="2"/>
<circle cx="2123.00" cy="832.30" r="4" fill="rgba(82,166,32,0.5)" stroke="rgb(82,166,32)" stroke-width="2"/>
<circle cx="2184.10" cy="970.10" r="4" fill="rgba(82,166,32,0.5)" stroke="rgb(82,166,32)" stroke-width="2"/>
<circle cx="2245.20" cy="1004.55" r="4" fill="rgba(82,166,32,0.5)" stroke="rgb(82,166,32)" stroke-width="2"/>
<circle cx="2306.30" cy="987.33" r="4" fill="rgba(82,166,32,0.5)" stroke="rgb(82,166,32)" stroke-width="2"/>
<circle cx="2367.40" cy="1039.00" r="4" fill="rgba(82,166,32,0.5)" stroke="rgb(82,166,32)" stroke-width="2"/>
<circle cx="2428.50" cy="1039.00" r="4" fill="rgba(82,166,32,0.5)" stroke="rgb(82,166,32)" stroke-width="2"/>
<circle cx="2489.60" cy="1039.00" r="4" fill="rgba(82,166,32,0.5)" stroke="rgb(82,166,32)" stroke-width="2"/>
<circle cx="2550.70" cy="1039.00" r="4" fill="rgba(82,166,32,0.5)" stroke="rgb(82,166,32)" stroke-width="2"/>
<circle cx="2611.80" cy="1021.77" r="4" fill="rgba(82,166,32,0.5)" stroke="rgb(82,166,32)" stroke-width="2"/>
<circle cx="2672.90" cy="1004.55" r="4" fill="rgba(82,166,32,0.5)" stroke="rgb(82,166,32)" stroke-width="2"/>
<circle cx="2734.00" cy="1039.00" r="4" fill="rgba(82,166,32,0.5)" stroke="rgb(82,166,32)" stroke-width="2"/>
<polyline points="901.00,1021.77 962.10,1039.00 1023.20,1004.55 1084.30,883.98 1145.40,1039.00 1206.50,1039.00 1267.60,1004.55 1328.70,1004.55 1389.80,1004.55 1450.90,1039.00 1512.00,952.88 1573.10,1039.00 1634.20,1039.00 1695.30,1004.55 1756.40,1004.55 1817.50,1004.55 1878.60,1039.00 1939.70,1039.00 2000.80,1039.00 2061.90,1039.00 2123.00,970.10 2184.10,1021.77 2245.20,1021.77 2306.30,1039.00 2367.40,1039.00 2428.50,1039.00 2489.60,1039.00 2550.70,1021.77 2611.80,1021.77 2672.90,1039.00 2734.00,1021.77" fill="none" stroke="rgb(255,167,38)" stroke-width="5.5" stroke-linejoin="round"/>
<circle cx="901.00" cy="1021.77" r="4" fill="rgba(255,167,38,0.5)" stroke="rgb(255,167,38)" stroke-width="2"/>
<circle cx="962.10" cy="1039.00" r="4" fill="rgba(255,167,38,0.5)" stroke="rgb(255,167,38)" stroke-width="2"/>
<circle cx="1023.20" cy="1004.55" r="4" fill="rgba(255,167,38,0.5)" stroke="rgb(255,167,38)" stroke-width="2"/>
<circle cx="1084.30" cy="883.98" r="4" fill="rgba(255,167,38,0.5)" stroke="rgb(255,167,38)" stroke-width="2"/>
<circle cx="1145.40" cy="1039.00" r="4" fill="rgba(255,167,38,0.5)" stroke="rgb(255,167,38)" stroke-width="2"/>
<circle cx="1206.50" cy="1039.00" r="4" fill="rgba(255,167,38,0.5)" stroke="rgb(255,167,38)" stroke-width="2"/>
<circle cx="1267.60" cy="1004.55" r="4" fill="rgba(255,167,38,0.5)" stroke="rgb(255,167,38)" stroke-width="2"/>
<circle cx="1328.70" cy="1004.55" r="4" fill="rgba(255,167,38,0.5)" stroke="rgb(255,167,38)" stroke-width="2"/>
<circle cx="1389.80" cy="1004.55" r="4" fill="rgba(255,167,38,0.5)" stroke="rgb(255,167,38)" stroke-width="2"/>
<circle cx="1450.90" cy="1039.00" r="4" fill="rgba(255,167,38,0.5)" stroke="rgb(255,167,38)" stroke-width="2"/>
<circle cx="1512.00" cy="952.88" r="4" fill="rgba(255,167,38,0.5)" stroke="rgb(255,167,38)" stroke-width="2"/>
<circle cx="1573.10" cy="1039.00" r="4" fill="rgba(255,167,38,0.5)" stroke="rgb(255,167,38)" stroke-width="2"/>
<circle cx="1634.20" cy="1039.00" r="4" fill="rgba(255,167,38,0.5)" stroke="rgb(255,167,38)" stroke-width="2"/>
<circle cx="1695.30" cy="1004.55" r="4" fill="rgba(255,167,38,0.5)" stroke="rgb(255,167,38)" stroke-width="2"/>
<circle cx="1756.40" cy="1004.55" r="4" fill="rgba(255,167,38,0.5)" stroke="rgb(255,167,38)" stroke-width="2"/>
<circle cx="1817.50" cy="1004.55" r="4" fill="rgba(255,167,38,0.5)" stroke="rgb(255,167,38)" stroke-width="2"/>
<circle cx="1878.60" cy="1039.00" r="4" fill="rgba(255,167,38,0.5)" stroke="rgb(255,167,38)" stroke-width="2"/>
<circle cx="1939.70" cy="1039.00" r="4" fill="rgba(255,167,38,0.5)" stroke="rgb(255,167,38)" stroke-width="2"/>
<circle cx="2000.80" cy="1039.00" r="4" fill="rgba(255,167,38,0.5)" stroke="rgb(255,167,38)" stroke-width="2"/>
<circle cx="2061.90" cy="1039.00" r="4" fill="rgba(255,167,38,0.5)" stroke="rgb(255,167,38)" stroke-width="2"/>
<circle cx="2123.00" cy="970.10" r="4" fill="rgba(255,167,38,0.5)" stroke="rgb(255,167,38)" stroke-width="2"/>
<circle cx="2184.10" cy="1021.77" r="4" fill="rgba(255,167,38,0.5)" stroke="rgb(255,167,38)" stroke-width="2"/>
<circle cx="2245.20" cy="1021.77" r="4" fill="rgba(255,167,38,0.5)" stroke="rgb(255,167,38)" stroke-width="2"/>
<circle cx="2306.30" cy="1039.00" r="4" fill="rgba(255,167,38,0.5)" stroke="rgb(255,167,38)" stroke-width="2"/>
<circle cx="2367.40" cy="1039.00" r="4" fill="rgba(255,167,38,0.5)" stroke="rgb(255,167,38)" stroke-width="2"/>
<circle cx="2428.50" cy="1039.00" r="4" fill="rgba(255,167,38,0.5)" stroke="rgb(255,167,38)" stroke-width="2"/>
<circle cx="2489.60" cy="1039.00" r="4" fill="rgba(255,167,38,0.5)" stroke="rgb(255,167,38)" stroke-width="2"/>
<circle cx="2550.70" cy="1021.77" r="4" fill="rgba(255,167,38,0.5)" stroke="rgb(255,167,38)" stroke-width="2"/>
<circle cx="2611.80" cy="1021.77" r="4" fill="rgba(255,167,38,0.5)" stroke="rgb(255,167,38)" stroke-width="2"/>
<circle cx="2672.90" cy="1039.00" r="4" fill="rgba(255,167,38,0.5)" stroke="rgb(255,167,38)" stroke-width="2"/>
<circle cx="2734.00" cy="1021.77" r="4" fill="rgba(255,167,38,0.5)" stroke="rgb(255,167,38)" stroke-width="2"/>
<text x="880" y="1039.00" dy="0.35em" text-anchor="end" font-family="Liberation Sans" font-size="24" fill="rgba(0,0,0,0.6)">0</text>
<text x="880" y="1004.55" dy="0.35em" text-anchor="end" font-family="Liberation Sans" font-size="24" fill="rgba(0,0,0,0.6)">2</text>
<text x="880" y="970.10" dy="0.35em" text-anchor="end" font-family="Liberation Sans" font-size="24" fill="rgba(0,0,0,0.6)">4</text>
<text x="880" y="935.65" dy="0.35em" text-anchor="end" font-family="Liberation Sans" font-size="24" fill="rgba(0,0,0,0.6)">6</text>
<text x="880" y="901.20" dy="0.35em" text-anchor="end" font-family="Liberation Sans" font-size="24" fill="rgba(0,0,0,0.6)">8</text>
<text x="880" y="866.75" dy="0.35em" text-anchor="end" font-family="Liberation Sans" font-size="24" fill="rgba(0,0,0,0.6)">10</text>
<text x="880" y="832.30" dy="0.35em" text-anchor="end" font-family="Liberation Sans" font-size="24" fill="rgba(0,0,0,0.6)">12</text>
<text transform="translate(901.00,1059) rotate(-42)" dy="0.35em" text-anchor="end" font-family="Liberation Sans" font-size="24" fill="rgba(0,0,0,0.6)">12/08/2020</text>
<text transform="translate(962.10,1059) rotate(-42)" dy="0.35em" text-anchor="end" font-family="Liberation Sans" font-size="24" fill="rgba(0,0,0,0.6)">12/09/2020</text>
<text transform="translate(1023.20,1059) rotate(-42)" dy="0.35em" text-anchor="end" font-family="Liberation Sans" font-size="24" fill="rgba(0,0,0,0.6)">12/10/2020</text>
<text transform="translate(1084.30,1059) rotate(-42)" dy="0.35em" text-anchor="end" font-family="Liberation Sans" font-size="24" fill="rgba(0,0,0,0.6)">12/11/2020</text>
<text transform="translate(1145.40,1059) rotate(-42)" dy="0.35em" text-anchor="end" font-family="Liberation Sans" font-size="24" fill="rgba(0,0,0,0.6)">12/12/2020</text>
<text transform="translate(1206.50,1059) rotate(-42)" dy="0.35em" text-anchor="end" font-family="Liberation Sans" font-size="24" fill="rgba(0,0,0,0.6)">12/13/2020</text>
<text transform="translate(1267.60,1059) rotate(-42)" dy="0.35em" text-anchor="end" font-family="Liberation Sans" font-size="24" fill="rgba(0,0,0,0.6)">12/14/2020</text>
<text transform="translate(1328.70,1059) rotate(-42)" dy="0.35em" text-anchor="end" font-family="Liberation Sans" font-size="24" fill="rgba(0,0,0,0.6)">12/15/2020</text>
<text transform="translate(1389.80,1059) rotate(-42)" dy="0.35em" text-anchor="end" font-family="Liberation Sans" font-size="24" fill="rgba(0,0,0,0.6)">12/16/2020</text>
<text transform="translate(1450.90,1059) rotate(-42)" dy="0.35em" text-anchor="end" font-family="Liberation Sans" font-size="24" fill="rgba(0,0,0,0.6)">12/17/2020</text>
<text transform="translate(1512.00,1059) rotate(-42)" dy="0.35em" text-anchor="end" font-family="Liberation Sans" font-size="24" fill="rgba(0,0,0,0.6)">12/18/2020</text>
<text transform="translate(1573.10,1059) rotate(-42)" dy="0.35em" text-anchor="end" font-family="Liberation Sans" font-size="24" fill="rgba(0,0,0,0.6)">12/19/2020</text>
<text transform="translate(1634.20,1059) rotate(-42)" dy="0.35em" text-anchor="end" font-family="Liberation Sans" font-size="24" fill="rgba(0,0,0,0.6)">12/20/2020</text>
<text transform="translate(1695.30,1059) rotate(-42)" dy="0.35em" text-anchor="end" font-family="Liberation Sans" font-size="24" fill="rgba(0,0,0,0.6)">12/21/2020</text>
<text transform="translate(1756.40,1059) rotate(-42)" dy="0.35em" text-anchor="end" font-family="Liberation Sans" font-size="24" fill="rgba(0,0,0,0.6)">12/22/2020</text>
<text transform="translate(1817.50,1059) rotate(-42)" dy="0.35em" text-anchor="end" font-family="Liberation Sans" font-size="24" fill="rgba(0,0,0,0.6)">12/23/2020</text>
<text transform="translate(1878.60,1059) rotate(-42)" dy="0.35em" text-anchor="end" font-family="Liberation Sans" font-size="24" fill="rgba(0,0,0,0.6)">12/24/2020</text>
<text transform="translate(1939.70,1059) rotate(-42)" dy="0.35em" text-anchor="end" font-family="Liberation Sans" font-size="24" fill="rgba(0,0,0,0.6)">12/25/2020</text>
<text transform="translate(2000.80,1059) rotate(-42)" dy="0.35em" text-anchor="end" font-family="Liberation Sans" font-size="24" fill="rgba(0,0,0,0.6)">12/26/2020</text>
<text transform="translate(2061.90,1059) rotate(-42)" dy="0.35em" text-anchor="end" font-family="Liberation Sans" font-size="24" fill="rgba(0,0,0,0.6)">12/27/2020</text>
<text transform="translate(2123.00,1059) rotate(-42)" dy="0.35em" text-anchor="end" font-family="Liberation Sans" font-size="24" fill="rgba(0,0,0,0.6)">12/28/2020</text>
<text transform="translate(2184.10,1059) rotate(-42)" dy="0.35em" text-anchor="end" font-family="Liberation Sans" font-size="24" fill="rgba(0,0,0,0.6)">12/29/2020</text>
<text transform="translate(2245.20,1059) rotate(-42)" dy="0.35em" text-anchor="end" font-family="Liberation Sans" font-size="24" fill="rgba(0,0,0,0.6)">12/30/2020</text>
<text transform="translate(2306.30,1059) rotate(-42)" dy="0.35em" text-anchor="end" font-family="Liberation Sans" font-size="24" fill="rgba(0,0,0,0.6)">12/31/2020</text>
<text transform="translate(2367.40,1059) rotate(-42)" dy="0.35em" text-anchor="end" font-family="Liberation Sans" font-size="24" fill="rgba(0,0,0,0.6)">01/01/2021</text>
<text transform="translate(2428.50,1059) rotate(-42)" dy="0.35em" text-anchor="end" font-family="Liberation Sans" font-size="24" fill="rgba(0,0,0,0.6)">01/02/2021</text>
<text transform="translate(2489.60,1059) rotate(-42)" dy="0.35em" text-anchor="end" font-family="Liberation Sans" font-size="24" fill="rgba(0,0,0,0.6)">01/03/2021</text>
<text transform="translate(2550.70,1059) rotate(-42)" dy="0.35em" text-anchor="end" font-family="Liberation Sans" font-size="24" fill="rgba(0,0,0,0.6)">01/04/2021</text>
<text transform="translate(2611.80,1059) rotate(-42)" dy="0.35em" text-anchor="end" font-family="Liberation Sans" font-size="24" fill="rgba(0,0,0,0.6)">01/05/2021</text>
<text transform="translate(2672.90,1059) rotate(-42)" dy="0.35em" text-anchor="end" font-family="Liberation Sans" font-size="24" fill="rgba(0,0,0,0.6)">01/06/2021</text>
<text transform="translate(2734.00,1059) rotate(-42)" dy="0.35em" text-anchor="end" font-family="Liberation Sans" font-size="24" fill="rgba(0,0,0,0.6)">01/07/2021</text>
</svg>
<svg class="ic" style="left:793.00px;top:1252.00px;width:34px;height:34px;fill:rgba(0,0,0,0.6);color:rgba(0,0,0,0.6);" viewBox="0 0 24 24"><path d="M10 4H4c-1.1 0-1.99.9-1.99 2L2 18c0 1.1.9 2 2 2h16c1.1 0 2-.9 2-2V8c0-1.1-.9-2-2-2h-8l-2-2z"/></svg>
<div id="t46" class="t" style="left:845.00px;top:1253.84px;font-size:31.5px;font-weight:700;color:rgba(0,0,0,0.6);;letter-spacing:-1.292px">By department</div>
<div id="t47" class="t" style="left:1579.50px;top:1248.84px;font-size:25px;font-weight:400;color:rgba(0,0,0,0.6);;letter-spacing:-1.772px">MORE DETAILS</div>
<div class="r" style="left:794px;top:1342px;width:26px;height:26px;border-radius:50%;background:#FFA726"></div><div id="t48" class="t" style="left:834.50px;top:1340.72px;font-size:27.5px;font-weight:400;color:rgba(0,0,0,0.6);;letter-spacing:-0.594px">Incoming messages</div><svg class="ic" style="left:1096px;top:1348px;width:20px;height:10px" viewBox="0 0 20 10"><path d="M0 0h20L10 10z" fill="#111"/></svg><div class="r" style="left:1142px;top:1342px;width:26px;height:26px;border-radius:50%;background:#52A620"></div><div id="t49" class="t" style="left:1185.00px;top:1340.72px;font-size:27.5px;font-weight:400;color:rgba(0,0,0,0.6);;letter-spacing:-1.001px">Answers</div><svg class="ic" style="left:1310px;top:1348px;width:20px;height:10px" viewBox="0 0 20 10"><path d="M0 0h20L10 10z" fill="#111"/></svg>
<svg class="ic" style="left:1805.00px;top:1251.00px;width:34px;height:34px;fill:rgba(0,0,0,0.6);color:rgba(0,0,0,0.6);" viewBox="0 0 24 24"><path d="M12 12c2.21 0 4-1.79 4-4s-1.79-4-4-4-4 1.79-4 4 1.79 4 4 4zm0 2c-2.67 0-8 1.34-8 4v2h16v-2c0-2.66-5.33-4-8-4z"/></svg>
<div id="t50" class="t" style="left:1856.00px;top:1254.34px;font-size:31.5px;font-weight:700;color:rgba(0,0,0,0.6);;letter-spacing:-1.356px">By agent</div>
<div id="t51" class="t" style="left:2594.00px;top:1248.84px;font-size:25px;font-weight:400;color:rgba(0,0,0,0.6);;letter-spacing:-1.772px">MORE DETAILS</div>
<div id="t52" class="t" style="left:1856.00px;top:1318.72px;font-size:27.5px;font-weight:400;color:rgba(0,0,0,0.6);;letter-spacing:-0.832px">Answers</div>
<svg class="ic" style="left:1976px;top:1329px;width:20px;height:10px" viewBox="0 0 20 10"><path d="M0 0h20L10 10z" fill="#111"/></svg>
<svg class="ic" style="left:1980px;top:1340px;width:330px;height:54px;overflow:hidden" viewBox="1980 1340 330 54">
<path d="M2141,1502 L2141.00,1356.00 A146,146 0 0,1 2214.00,1628.44 Z" fill="rgba(255,167,38,0.5)" stroke="rgb(255,167,38)" stroke-width="4" stroke-linejoin="bevel"/>
<path d="M2141,1502 L2214.00,1628.44 A146,146 0 0,1 2014.56,1575.00 Z" fill="rgba(82,166,32,0.5)" stroke="rgb(82,166,32)" stroke-width="4" stroke-linejoin="bevel"/>
<path d="M2141,1502 L2014.56,1575.00 A146,146 0 0,1 2098.80,1362.23 Z" fill="rgba(61,138,184,0.5)" stroke="rgb(61,138,184)" stroke-width="4" stroke-linejoin="bevel"/>
<path d="M2141,1502 L2098.80,1362.23 A146,146 0 0,1 2141.00,1356.00 Z" fill="rgba(142,78,198,0.5)" stroke="rgb(142,78,198)" stroke-width="4" stroke-linejoin="bevel"/>
</svg>
<div class="r" style="left:2508px;top:1326px;width:20px;height:20px;background:rgba(255,167,38,0.45)"></div>
<div class="r" style="left:2506px;top:1324px;width:20px;height:20px;background:#fdd593;border:2px solid #FFA726;box-sizing:border-box"></div>
<div id="t53" class="t" style="left:2534.00px;top:1318.72px;font-size:27.5px;font-weight:400;color:rgba(0,0,0,0.6);;letter-spacing:-1.000px">Laura</div>
<div class="r" style="left:2508px;top:1364px;width:20px;height:20px;background:rgba(82,166,32,0.45)"></div>
<div class="r" style="left:2506px;top:1362px;width:20px;height:20px;background:#afd39a;border:2px solid #4aa21c;box-sizing:border-box"></div>
<div id="t54" class="t" style="left:2535.00px;top:1356.72px;font-size:27.5px;font-weight:400;color:rgba(0,0,0,0.6);;letter-spacing:-0.125px">Tomas</div>
</body></html>
